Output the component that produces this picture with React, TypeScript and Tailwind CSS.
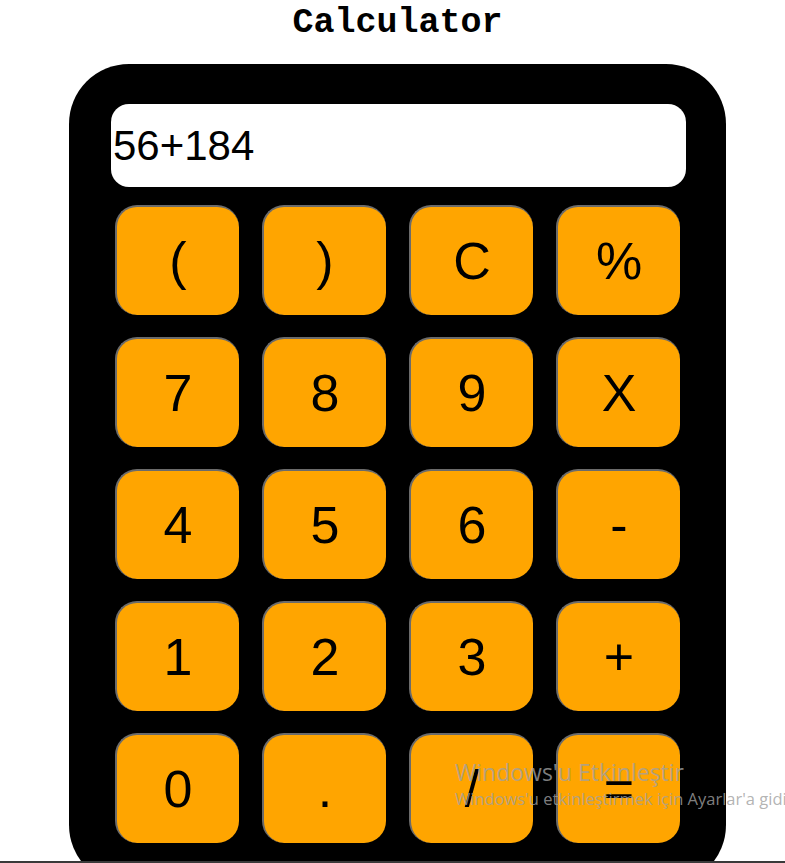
const keys = ["(", ")", "C", "%", "7", "8", "9", "X", "4", "5", "6", "-", "1", "2", "3", "+", "0", ".", "/", "="];

function Key({ label }: { label: string }) {
  return (
    <button
      type="button"
      className="h-[110px] w-[124px] rounded-[22px] border-l-2 border-t-2 border-[#6b6b6b] bg-[#ffa500] text-[52px] leading-none text-black"
      style={{ fontFamily: '"Liberation Sans", Arial, sans-serif' }}
    >
      {label}
    </button>
  );
}

export default function App() {
  return (
    <div className="relative h-[863px] overflow-hidden border-b-2 border-[#3a3a3a] bg-white">
      <div className="ml-[69px] w-[657px]">
        <h1
          className="pt-[6px] text-center text-[35px] font-bold leading-none text-black"
          style={{ fontFamily: '"Liberation Mono", "Courier New", monospace' }}
        >
          Calculator
        </h1>
        <div className="mt-[23px] rounded-[60px] bg-black px-[42px] pb-[42px] pt-[40px]">
          <div
            className="flex h-[83px] w-[575px] items-center rounded-[18px] bg-white px-[2px] text-[42px] text-black"
            style={{ fontFamily: '"Liberation Sans", Arial, sans-serif' }}
          >
            56+184
          </div>
          <div className="mt-[18px] grid grid-cols-[repeat(4,124px)] gap-x-[23px] gap-y-[22px] pl-[4px]">
            {keys.map((k) => (
              <Key key={k} label={k} />
            ))}
          </div>
        </div>
      </div>
      <div
        className="pointer-events-none absolute left-[455px] top-[756px] text-[#a0a0a0]/80"
        style={{ fontFamily: '"Open Sans", "Noto Sans", sans-serif' }}
      >
        <div className="whitespace-nowrap text-[23px] leading-[32px]">Windows'u Etkinleştir</div>
        <div className="whitespace-nowrap text-[16.5px] leading-[22px]">Windows'u etkinleştirmek için Ayarlar'a gidin.</div>
      </div>
    </div>
  );
}
